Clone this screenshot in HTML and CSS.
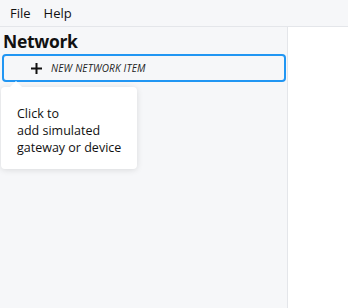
FILE: index.html
```html
<!DOCTYPE html>
<html lang="en">
<head>
    <meta charset="UTF-8">
    <title>Network</title>
    <link rel="stylesheet" href="styles.css">
</head>
<body>
    <div class="menu-bar">
        <span class="menu-item">File</span>
        <span class="menu-item">Help</span>
    </div>

    <div class="main">
        <div class="sidebar">
            <h1 class="sidebar-title">Network</h1>
            <div class="add-wrap">
                <button class="add-button">
                    <svg class="plus-icon" width="11" height="11" viewBox="0 0 11 11">
                        <path d="M5.5 0v11M0 5.5h11" stroke="#111" stroke-width="2"/>
                    </svg>
                    <span class="add-label">New network item</span>
                </button>
                <div class="tooltip">
                    Click to<br>
                    add simulated<br>
                    gateway or device
                </div>
            </div>
        </div>
        <div class="content"></div>
    </div>
</body>
</html>
```

FILE: styles.css
```css
* {
    margin: 0;
    padding: 0;
    box-sizing: border-box;
}

body {
    font-family: "Open Sans", "Noto Sans", sans-serif;
    width: 348px;
    height: 308px;
    display: flex;
    flex-direction: column;
    background: #ffffff;
    color: #111;
    overflow: hidden;
}

.menu-bar {
    height: 27px;
    background: #f6f7f9;
    border-bottom: 1px solid #e4e6ea;
    display: flex;
    align-items: center;
    padding-left: 10px;
    gap: 13px;
    font-size: 13px;
}

.main {
    flex: 1;
    display: flex;
}

.sidebar {
    width: 288px;
    background: #f6f7f9;
    border-right: 1px solid #e4e6ea;
    padding: 2px 2px 0 2px;
}

.sidebar-title {
    font-size: 17.5px;
    font-weight: 700;
    line-height: 24px;
    padding-left: 1px;
    margin-bottom: 1px;
    letter-spacing: -0.3px;
}

.add-wrap {
    position: relative;
}

.add-button {
    width: 284px;
    height: 28px;
    border: 2px solid #2196f3;
    border-radius: 4px;
    background: #f6f7f9;
    display: flex;
    align-items: center;
    padding-left: 27px;
    gap: 9px;
    font-family: inherit;
    cursor: pointer;
}

.add-label {
    font-size: 10px;
    font-style: italic;
    text-transform: uppercase;
    color: #222;
    letter-spacing: 0.2px;
}

.tooltip {
    position: absolute;
    left: -1px;
    top: 33px;
    width: 136px;
    height: 82px;
    background: #ffffff;
    border-radius: 4px;
    box-shadow: 0 1px 6px rgba(0, 0, 0, 0.12);
    padding: 18px 0 0 16px;
    font-size: 12.5px;
    line-height: 17px;
    color: #111;
}

.tooltip::before {
    content: "";
    position: absolute;
    left: 9px;
    top: -6px;
    border-left: 6px solid transparent;
    border-right: 6px solid transparent;
    border-bottom: 6px solid #ffffff;
}

.content {
    flex: 1;
    background: #ffffff;
}
```
